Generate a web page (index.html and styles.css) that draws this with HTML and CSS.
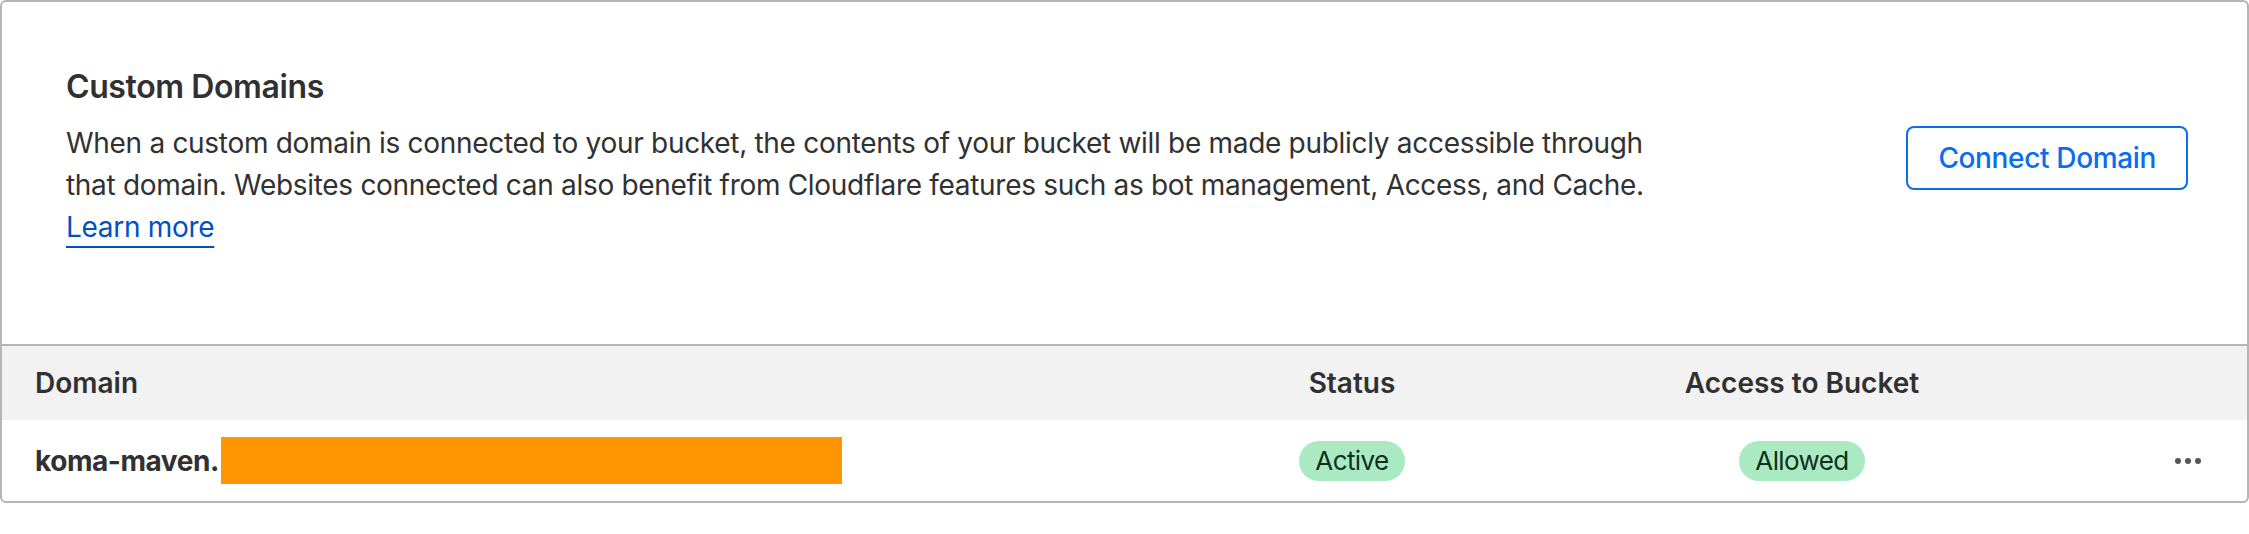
FILE: index.html
```html
<!DOCTYPE html>
<html lang="en">
<head>
<meta charset="utf-8">
<title>Custom Domains</title>
<link rel="stylesheet" href="styles.css">
</head>
<body>
<div class="card">
  <section class="intro">
    <div class="intro-text">
      <h2 class="title">Custom Domains</h2>
      <p class="desc">When a custom domain is connected to your bucket, the contents of your bucket will be made publicly accessible through that domain. Websites connected can also benefit from Cloudflare features such as bot management, Access, and Cache.</p>
      <div class="learn"><a class="link" href="#">Learn more</a></div>
    </div>
    <button class="btn-outline" type="button">Connect Domain</button>
  </section>
  <div class="table">
    <div class="row head">
      <div class="cell">Domain</div>
      <div class="cell center">Status</div>
      <div class="cell center">Access to Bucket</div>
      <div class="cell"></div>
    </div>
    <div class="row body-row">
      <div class="cell domain">koma-maven.<span class="redact"></span></div>
      <div class="cell center"><span class="pill">Active</span></div>
      <div class="cell center"><span class="pill">Allowed</span></div>
      <div class="cell actions">
        <svg class="dots" width="26" height="6" viewBox="0 0 26 6" aria-label="More actions"><circle cx="3" cy="3" r="3"/><circle cx="13" cy="3" r="3"/><circle cx="23" cy="3" r="3"/></svg>
      </div>
    </div>
  </div>
</div>
</body>
</html>
```

FILE: styles.css
```css
html, body {
  margin: 0;
  padding: 0;
  background: #ffffff;
}

body {
  font-family: Inter, "Noto Sans", "Liberation Sans", sans-serif;
  color: #313131;
}

.card {
  border: 2px solid #b5b5b5;
  border-radius: 6px;
  overflow: hidden;
  background: #ffffff;
}

.intro {
  display: flex;
  align-items: center;
  justify-content: space-between;
  padding: 65px 59px 96px 64px;
}

.intro-text {
  width: 1610px;
}

.title {
  margin: 0;
  font-size: 32px;
  line-height: 40px;
  font-weight: 600;
  letter-spacing: -0.4px;
  color: #313131;
}

.desc {
  margin: 15px 0 0;
  font-size: 28px;
  line-height: 42px;
  letter-spacing: -0.3px;
  color: #313131;
}

.learn {
  font-size: 28px;
  line-height: 42px;
  letter-spacing: -0.3px;
}

.link {
  color: #0051c3;
  text-decoration: underline;
  text-decoration-thickness: 2px;
  text-underline-offset: 9px;
}

.btn-outline {
  flex: none;
  height: 64px;
  padding: 0 30px;
  border: 2px solid #0a6cf0;
  border-radius: 8px;
  background: #ffffff;
  color: #0a6cf0;
  font-family: inherit;
  font-size: 28px;
  font-weight: 500;
  letter-spacing: -0.35px;
  line-height: 60px;
}

.table {
  border-top: 2px solid #b5b5b5;
}

.row {
  display: grid;
  grid-template-columns: 1fr 250px 650px 120px;
  align-items: center;
}

.head {
  height: 74px;
  background: #f2f2f2;
  font-size: 28px;
  font-weight: 600;
  color: #313131;
}

.body-row {
  height: 81px;
}

.cell {
  padding-left: 33px;
}

.cell.center {
  padding-left: 0;
  text-align: center;
}

.domain {
  display: flex;
  align-items: center;
  font-size: 28px;
  font-weight: 700;
  letter-spacing: -0.45px;
  color: #313131;
}

.redact {
  display: inline-block;
  width: 621px;
  height: 47px;
  margin-left: 2px;
  background: #ff9500;
}

.pill {
  display: inline-block;
  height: 40px;
  padding: 0 16px;
  border-radius: 20px;
  background: #a9eac2;
  color: #10301c;
  font-size: 26px;
  letter-spacing: -0.6px;
  line-height: 40px;
}

.actions {
  padding-left: 0;
  padding-right: 46px;
  display: flex;
  justify-content: flex-end;
}

.dots {
  display: block;
  fill: #555555;
}
```
